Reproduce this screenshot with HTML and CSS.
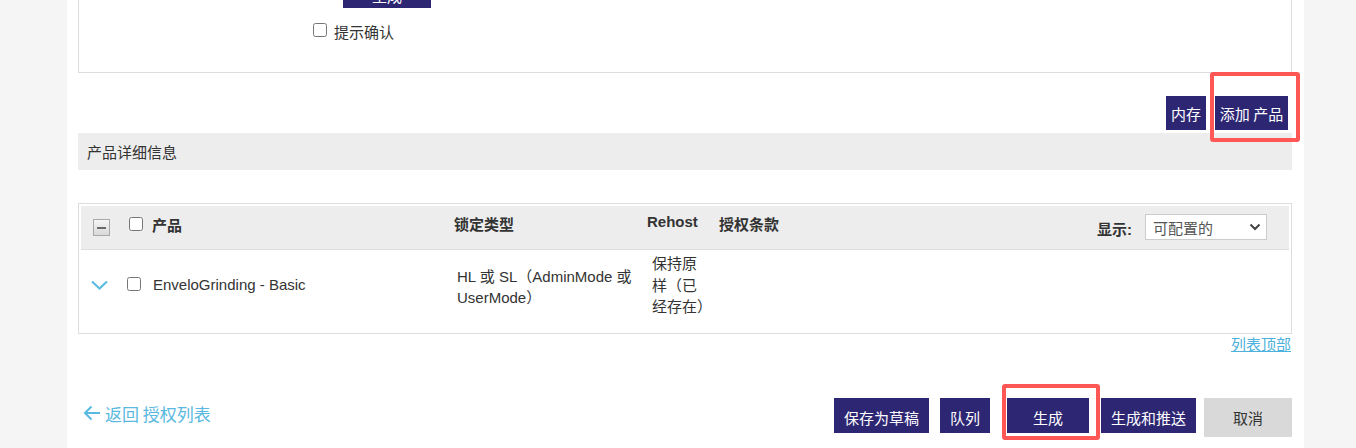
FILE: index.html
```html
<!DOCTYPE html>
<html lang="zh">
<head>
<meta charset="utf-8">
<title>产品详细信息</title>
<link rel="stylesheet" href="styles.css">
</head>
<body>
<div class="page">
  <div class="top-box">
    <div class="btn btn-partial">生成</div>
    <label class="confirm"><input type="checkbox" class="cb"><span>提示确认</span></label>
  </div>

  <div class="actions-top">
    <button class="btn btn-mem">内存</button>
    <span class="mark mark-add"><button class="btn btn-add">添加 产品</button><span class="mark-box"></span></span>
  </div>

  <div class="section-head">产品详细信息</div>

  <div class="table-box">
    <div class="grid thead">
      <div class="c1"><span class="minus-box"><span></span></span></div>
      <div class="c2 hcheck"><input type="checkbox" class="cb"><span>产品</span></div>
      <div class="c3 htext">锁定类型</div>
      <div class="c4 htext rehost">Rehost</div>
      <div class="c5 htext">授权条款</div>
      <div class="c6 show">
        <span class="show-label">显示:</span>
        <div class="select"><span>可配置的</span>
          <svg width="12" height="8" viewBox="0 0 12 8"><path d="M1.5 1.5 L6 6 L10.5 1.5" fill="none" stroke="#444" stroke-width="2"/></svg>
        </div>
      </div>
    </div>
    <div class="grid trow">
      <div class="c1 chev"><svg width="17" height="10" viewBox="0 0 17 10"><path d="M1 1.5 L8.5 8.5 L16 1.5" fill="none" stroke="#5bbde2" stroke-width="2.2"/></svg></div>
      <div class="c2 rcheck"><input type="checkbox" class="cb"><span>EnveloGrinding - Basic</span></div>
      <div class="c3 lock">HL 或 SL（AdminMode 或 UserMode）</div>
      <div class="c4 rh"><div class="rh-text">保持原样（已<span class="nowrap">经存在）</span></div></div>
      <div class="c5"></div>
    </div>
  </div>

  <div class="top-link"><a href="#">列表顶部</a></div>

  <div class="footer">
    <a class="back" href="#">
      <svg width="18" height="16" viewBox="0 0 18 16"><path d="M17 8 H2 M8.5 1.5 L2 8 L8.5 14.5" fill="none" stroke="#5ab9e0" stroke-width="2"/></svg>
      <span>返回 授权列表</span>
    </a>
    <div class="btns">
      <button class="btn b-draft">保存为草稿</button>
      <button class="btn b-queue">队列</button>
      <span class="mark mark-gen"><button class="btn b-gen">生成</button><span class="mark-box"></span></span>
      <button class="btn b-push">生成和推送</button>
      <button class="btn b-cancel">取消</button>
    </div>
  </div>
</div>
</body>
</html>
```
FILE: styles.css
```css
html, body {
  margin: 0;
  padding: 0;
  height: 448px;
  overflow: hidden;
  background: #f5f5f5;
}
body {
  font-family: "Liberation Sans", "Noto Sans CJK SC", sans-serif;
  font-size: 15px;
  color: #333;
}
.page {
  display: flow-root;
  margin-left: 67px;
  width: 1237px;
  box-sizing: border-box;
  padding: 0 12px 0 11px;
  height: 448px;
  background: #fff;
}
.cb {
  margin: 0;
  width: 14px;
  height: 14px;
  flex: none;
}
.btn {
  font-family: "Noto Sans CJK SC", "Liberation Sans", sans-serif;
  font-size: 15px;
  border: none;
  background: #2d2673;
  color: #fff;
  box-sizing: border-box;
  display: inline-flex;
  align-items: center;
  justify-content: center;
  padding: 0;
  margin: 0;
  line-height: 1;
}

/* top box */
.top-box {
  margin-top: -40px;
  border: 1px solid #ddd;
  padding: 12px 0 31px 0;
  display: flex;
  flex-direction: column;
  align-items: flex-start;
}
.btn-partial {
  margin-left: 264px;
  width: 88px;
  height: 35px;
  padding-top: 10px;
}
.confirm {
  margin-top: 13px;
  margin-left: 234px;
  height: 20px;
  display: flex;
  align-items: center;
  gap: 7px;
  font-family: "Noto Sans CJK SC", sans-serif;
}
.confirm .cb { margin-top: -2px; }
.confirm span { margin-top: 1px; }

.actions-top {
  display: flex;
  justify-content: flex-end;
  gap: 9px;
  margin-top: 23px;
  padding-right: 4px;
}
.btn-mem { width: 40px; height: 34px; }
.btn-add { width: 73px; height: 34px; }

.mark { position: relative; display: inline-flex; }
.mark-box {
  position: absolute;
  border: 4px solid #ff5656;
  border-radius: 3px;
  pointer-events: none;
}
.mark-add .mark-box { left: -5px; right: -12px; top: -24px; bottom: -12px; }
.mark-gen .mark-box { left: -5px; right: -11px; top: -14px; bottom: -7px; }

.section-head {
  margin-top: 3px;
  height: 37px;
  background: #ededed;
  padding-left: 9px;
  display: flex;
  align-items: center;
  font-family: "Noto Sans CJK SC", sans-serif;
}

/* table */
.table-box {
  margin-top: 33px;
  border: 1px solid #ddd;
  padding: 2px;
}
.grid {
  display: grid;
  grid-template-columns: 45px 324px 193px 72px 1fr auto;
  align-items: start;
}
.thead {
  height: 43px;
  background: #ededed;
  border-bottom: 1px solid #ddd;
  font-weight: bold;
}
.trow { height: 81px; }
.minus-box {
  display: flex;
  align-items: center;
  justify-content: center;
  margin: 13px 0 0 12px;
  width: 17px;
  height: 17px;
  box-sizing: border-box;
  border: 1px solid #a9a9a9;
  background: linear-gradient(#f4f4f4, #d9d9d9);
}
.minus-box span {
  width: 9px;
  height: 2px;
  background: #6a6a6a;
}
.hcheck {
  display: flex;
  align-items: center;
  gap: 9px;
  margin-top: 8px;
  height: 21px;
  padding-left: 3px;
}
.hcheck .cb { margin-top: -1px; }
.htext {
  margin-top: 8px;
  line-height: 21px;
  padding-left: 4px;
}
.rehost { margin-top: 5px; }
.show {
  display: flex;
  align-items: flex-start;
  padding-right: 22px;
}
.show-label {
  margin-top: 13px;
  line-height: 21px;
  margin-right: 13px;
}
.select {
  margin-top: 8px;
  width: 122px;
  height: 26px;
  box-sizing: border-box;
  border: 1px solid #ccc;
  background: #fff;
  display: flex;
  align-items: center;
  justify-content: space-between;
  padding: 0 5px 0 7px;
  font-weight: normal;
  color: #555;
}
.chev {
  margin-top: 24px;
  height: 21px;
  display: flex;
  align-items: center;
  padding-left: 10px;
}
.rcheck {
  display: flex;
  align-items: center;
  gap: 12px;
  margin-top: 24px;
  height: 21px;
  padding-left: 1px;
}
.rcheck .cb { margin-top: -2px; }
.lock {
  margin-top: 16px;
  line-height: 21px;
  padding-left: 7px;
}
.rh {
  margin-top: 3px;
  padding-left: 9px;
  line-height: 21.5px;
}
.rh-text { width: 52px; }
.nowrap { white-space: nowrap; }

.top-link {
  margin-top: 1px;
  text-align: right;
  padding-right: 1px;
  line-height: 20px;
}
.top-link a {
  color: #4cb1dc;
  text-decoration: underline;
}

.footer {
  margin-top: 43px;
  display: flex;
  justify-content: space-between;
  align-items: flex-start;
}
.back {
  display: flex;
  align-items: center;
  gap: 4px;
  margin-top: 3px;
  padding-left: 5px;
  height: 24px;
  color: #5ab9e0;
  font-size: 17px;
  text-decoration: none;
  font-family: "Noto Sans CJK SC", sans-serif;
}
.btns {
  display: flex;
  align-items: flex-start;
}
.btns .btn { height: 35px; padding-top: 4px; }
.b-draft { width: 95px; }
.b-queue { width: 50px; margin-left: 11px; }
.mark-gen { margin-left: 17px; }
.b-gen { width: 82px; }
.b-push { width: 95px; margin-left: 12px; }
.btns .b-cancel {
  width: 88px;
  height: 39px;
  margin-left: 8px;
  padding-top: 0;
  background: #d9d9d9;
  color: #333;
}
```
